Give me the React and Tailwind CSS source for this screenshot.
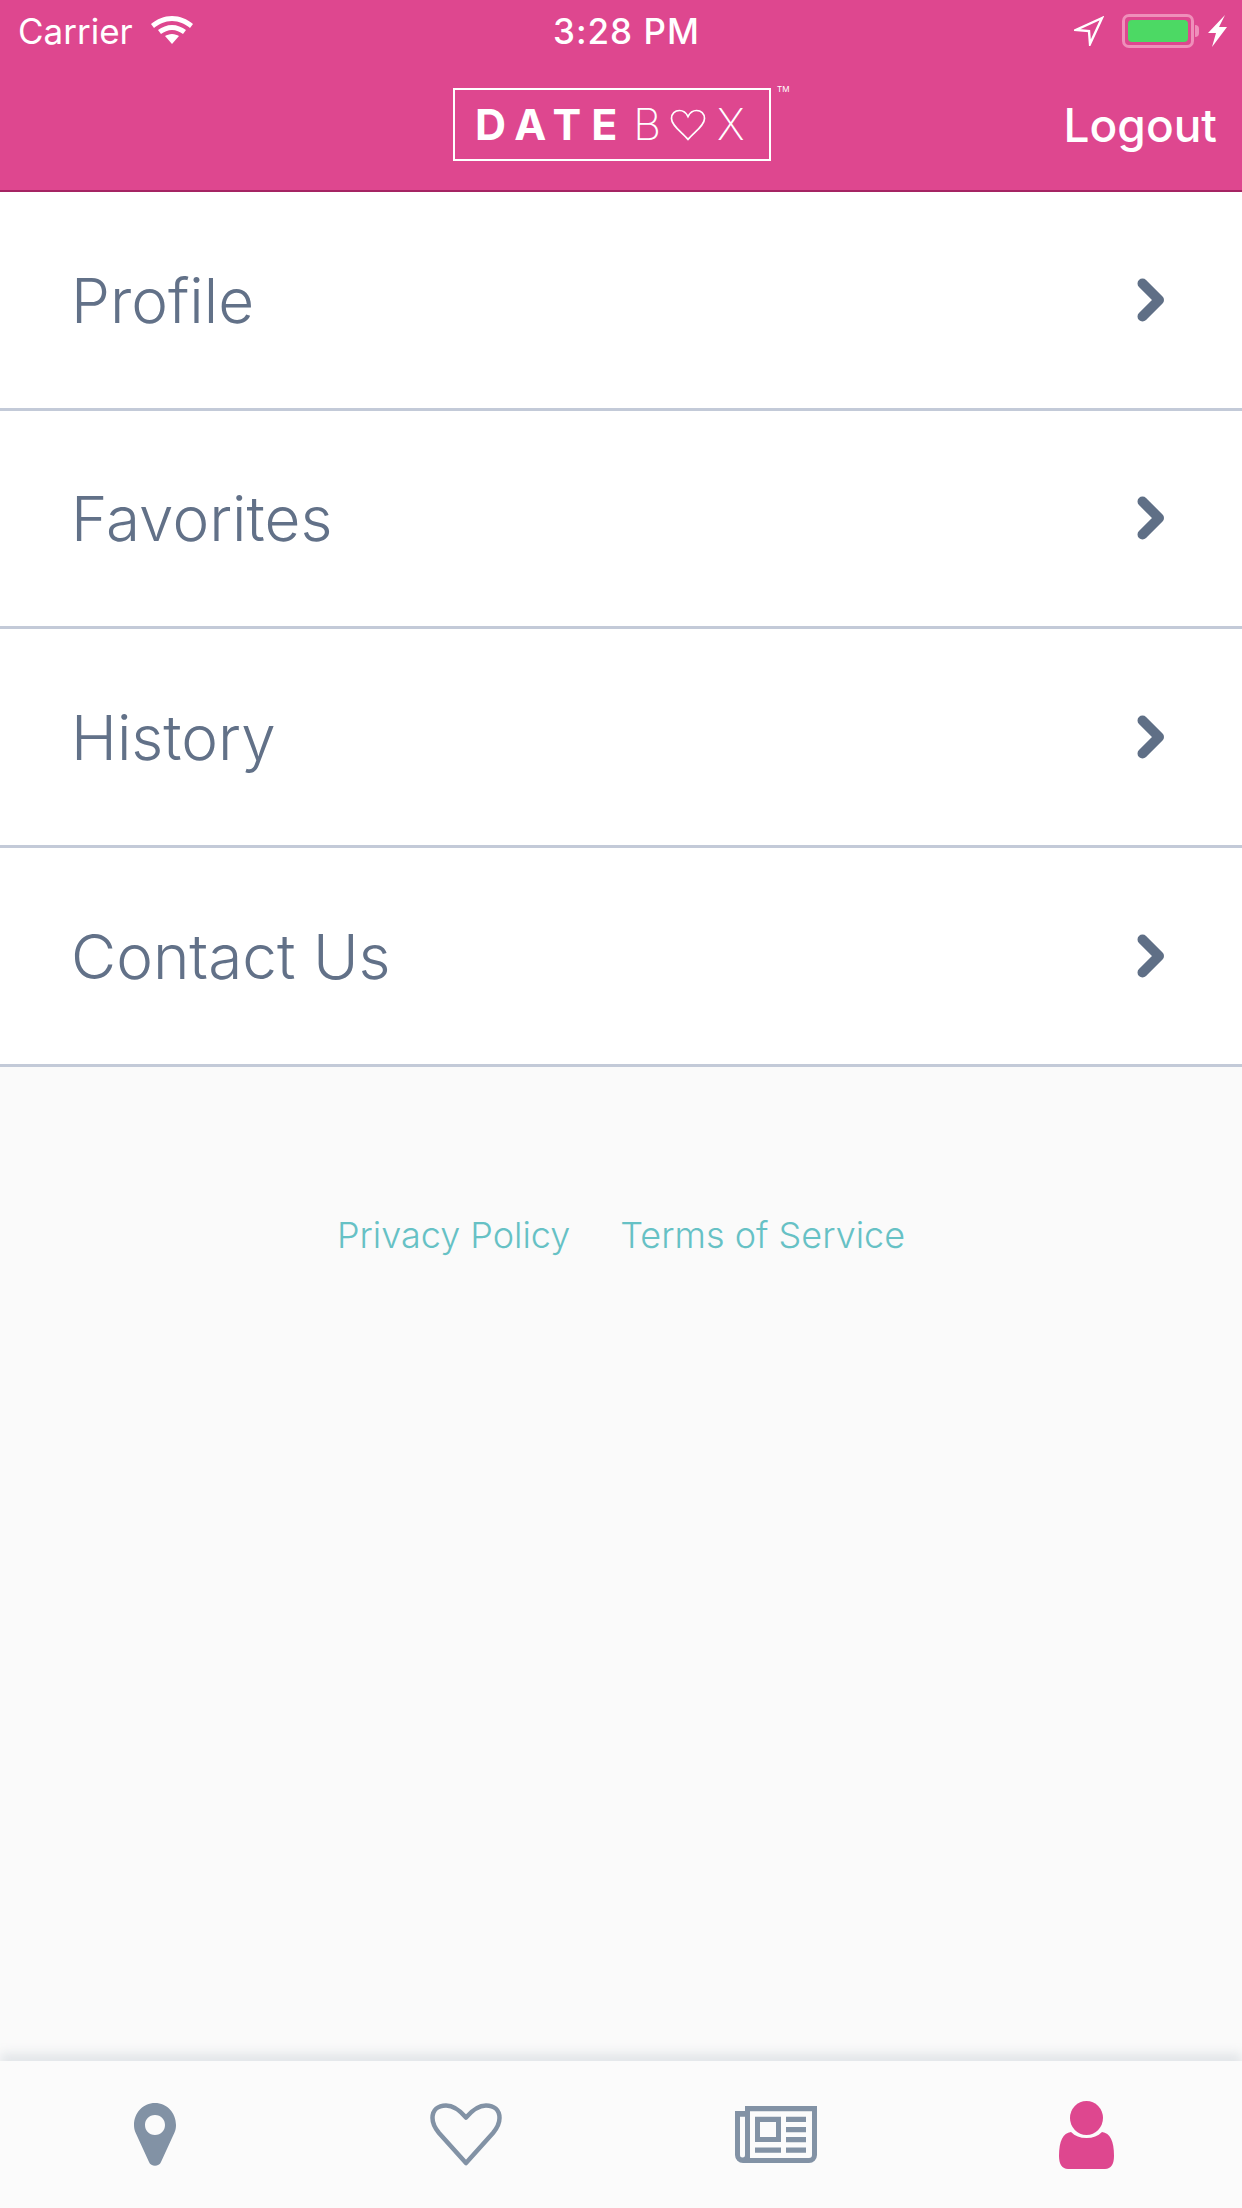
const menuItems = ['Profile', 'Favorites', 'History', 'Contact Us'];

function Chevron() {
  return (
    <svg width="28" height="44" viewBox="0 0 28 44" fill="none">
      <path d="M5.500 5.500L22 22 5.500 38.500" stroke="#5f6f86" strokeWidth="10" strokeLinejoin="round" strokeLinecap="round" />
    </svg>
  );
}

function StatusBar() {
  return (
    <div className="grid h-[62px] grid-cols-3 items-center leading-none text-white">
      <div className="flex items-center gap-[18px] pl-[18px] text-[35px]">
        <span>Carrier</span>
        <svg width="42" height="30" viewBox="0 0 42 30" fill="white" className="-mt-[3px]">
          <path d="M21 1C13 1 6 4 0 9l3 4c5-4 11-7 18-7s13 3 18 7l3-4C36 4 29 1 21 1z" />
          <path d="M21 10c-5 0-10 2-14 5l3 4c3-2 7-4 11-4s8 2 11 4l3-4c-4-3-9-5-14-5z" />
          <path d="M21 19c-3 0-5 1-7 2l7 8 7-8c-2-1-4-2-7-2z" />
        </svg>
      </div>
      <div className="pl-[139px] text-[35px] font-medium tracking-[1px] whitespace-nowrap">3:28 PM</div>
      <div className="flex items-center justify-end gap-[18px] pr-[15px]">
        <svg width="30" height="30" viewBox="0 0 30 30" fill="none" stroke="white" strokeWidth="2.4">
          <path d="M28 2L2 14l13 1 1 13z" />
        </svg>
        <div className="flex items-center gap-[1px]">
          <div className="flex h-[34px] w-[72px] items-center justify-center rounded-[7px] border-[3px] border-[#ef8fba] p-[3px]">
            <div className="h-full w-full rounded-[4px] bg-[#4cd964]" />
          </div>
          <div className="h-[12px] w-[4px] rounded-r-full bg-[#ef8fba]" />
        </div>
        <svg width="20" height="32" viewBox="0 0 20 32" fill="white" className="-ml-[10px]">
          <path d="M18 0L1 18h8L5 32l15-20h-8z" />
        </svg>
      </div>
    </div>
  );
}

function Logo() {
  return (
    <div className="relative flex h-[73px] w-[318px] items-center border-2 border-white pl-[20px] text-[43px] leading-none text-white">
      <span className="font-bold tracking-[10px]">DATE</span>
      <span className="ml-[6px] font-extralight">B</span>
      <svg width="36" height="32" viewBox="0 0 36 32" fill="none" stroke="white" strokeWidth="1.7" className="ml-[9px]">
        <path d="M18 30.500C12 23 1.500 17 1.500 9.500c0-5 3.500-8 8-8 4 0 6.500 2 8.500 6 2-4 4.500-6 8.500-6 4.500 0 8 3 8 8 0 7.500-10.500 13.500-16.500 21z" />
      </svg>
      <span className="ml-[11px] font-extralight">X</span>
      <span className="absolute top-[-5px] left-[322px] text-[8px]">TM</span>
    </div>
  );
}

function Header() {
  return (
    <header className="h-[192px] border-b-2 border-[#a52463] bg-[#de478f]">
      <StatusBar />
      <div className="flex items-start pt-[26px] pr-[25px] pl-[453px]">
        <Logo />
        <button className="mt-[14px] ml-auto text-[46px] leading-none font-medium text-white">Logout</button>
      </div>
    </header>
  );
}

function MenuRow({ label }) {
  return (
    <div className="flex h-[218.67px] items-center justify-between border-b-[3px] border-[#c3cad8] bg-white pr-[77px] pl-[71px]">
      <span className="pt-[2px] text-[62px] leading-none font-[350] text-[#627188]">{label}</span>
      <Chevron />
    </div>
  );
}

function TabBar() {
  return (
    <nav className="grid h-[147px] grid-cols-4 items-center bg-[#fbfbfb] shadow-[0_-8px_10px_rgba(130,145,160,0.18)]">
      <div className="flex justify-center">
        <svg width="42" height="63" viewBox="0 0 42 63" fill="#8292a5">
          <path fillRule="evenodd" d="M21 0C9 0 0 10 0 22c0 3 .5 5 1.500 7.500L15 59c2 5 10 5 12 0l13.500-29.500c1-2.500 1.500-4.500 1.500-7.500C42 10 33 0 21 0zm0 12c6 0 10 4.500 10 10s-4 10-10 10-10-4.500-10-10 4-10 10-10z" />
        </svg>
      </div>
      <div className="flex justify-center">
        <svg width="72" height="63" viewBox="0 0 72 63" fill="none" stroke="#8292a5" strokeWidth="4.500" strokeLinejoin="round">
          <path d="M36 60L9 30C4 24 2.500 19 2.500 15 2.500 7 8 2.500 16 2.500c8 0 14 5 20 12 6-7 12-12 20-12 8 0 13.500 4.500 13.500 12.500 0 4-1.500 9-6.500 15z" />
        </svg>
      </div>
      <div className="flex justify-center">
        <svg width="82" height="57" viewBox="0 0 82 57" fill="#8292a5">
          <path fillRule="evenodd" d="M10 0h72v49a8 8 0 0 1-8 8H8a8 8 0 0 1-8-8V5h10zM5 10.700V49a2.500 2.500 0 0 0 5 0V10.700zM15 5.300V52h59a3 3 0 0 0 3-3V5.300z" />
          <path fillRule="evenodd" d="M20 10.700h26V36H20zm5 5.300V31h16V16z" />
          <path d="M51 10.700h20V16H51zM51 21h20v5.300H51zM51 31h20v5.300H51zM51 41.500h20v5.300H51zM20 41.500h26v5.300H20z" />
        </svg>
      </div>
      <div className="flex justify-center">
        <svg width="55" height="68" viewBox="0 0 55 68" fill="#de478f">
          <ellipse cx="27.500" cy="17" rx="16.500" ry="17" />
          <path d="M12 31c4 4 9 6 15.500 6S39 35 43 31c8 1 12 9 12 24 0 8-3 13-9 13H9c-6 0-9-5-9-13C0 40 4 32 12 31z" />
        </svg>
      </div>
    </nav>
  );
}

export default function App() {
  return (
    <div className="flex h-[2208px] w-[1242px] flex-col bg-[#fafafa] font-['Inter',sans-serif]">
      <Header />
      <div>
        {menuItems.map((item) => (
          <MenuRow key={item} label={item} />
        ))}
      </div>
      <div className="flex flex-1 justify-center gap-[50px] pt-[150px] text-[36px] leading-none font-light text-[#66c1c5]">
        <a>Privacy Policy</a>
        <a>Terms of Service</a>
      </div>
      <TabBar />
    </div>
  );
}
